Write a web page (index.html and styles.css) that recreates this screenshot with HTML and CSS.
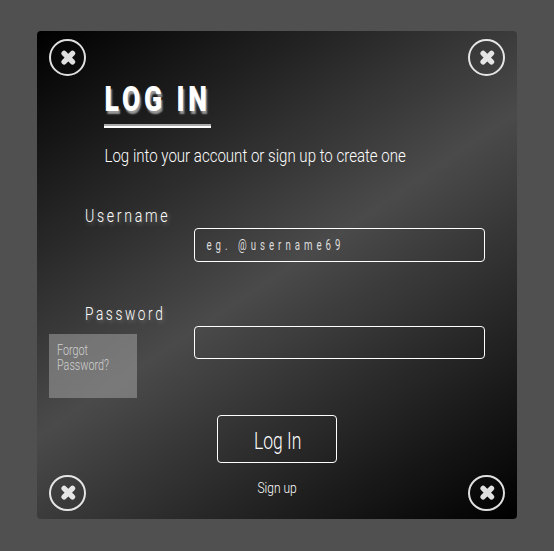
FILE: index.html
```html
<!DOCTYPE html>
<html lang="en">
<head>
<meta charset="utf-8">
<title>Log In</title>
<link rel="stylesheet" href="styles.css">
</head>
<body>
<svg width="0" height="0" class="defs"><symbol id="times" viewBox="0 0 21 21"><path d="M6.3 6.3l8.4 8.4M14.7 6.3l-8.4 8.4"/></symbol></svg>
<main class="card">
  <button class="close top left"><svg><use href="#times"/></svg></button>
  <button class="close top right"><svg><use href="#times"/></svg></button>
  <button class="close bottom left"><svg><use href="#times"/></svg></button>
  <button class="close bottom right"><svg><use href="#times"/></svg></button>
  <header class="intro">
    <h1><span class="narrow title">LOG IN</span></h1>
    <p><span class="narrow lead">Log into your account or sign up to create one</span></p>
  </header>
  <form class="form">
    <div class="field"><label><span class="narrow user">Username</span></label><div class="input"><span class="narrow hint">eg. @username69</span></div></div>
    <div class="field"><label><span class="narrow pass">Password</span></label><div class="input short"></div></div>
    <button type="button" class="submit"><span class="narrow login">Log In</span></button>
    <a class="signup"><span class="narrow sign">Sign up</span></a>
  </form>
  <a class="forgot"><span class="narrow forgot-text">Forgot<br>Password?</span></a>
</main>
</body>
</html>
```
FILE: styles.css
```css
* { box-sizing: border-box; }
body { margin: 0; height: 551px; padding: 31px 37px; background: #505050; color: #fff; font-family: Roboto, sans-serif; font-weight: 300; overflow: hidden; }
h1, p { margin: 0; }
button { font: inherit; color: inherit; background: none; padding: 0; }
.defs { position: absolute; }
.card { position: relative; width: 480px; height: 488px; border-radius: 4px; background: linear-gradient(146deg, #000, #4a4a4a 50%, #000); overflow: hidden; }
.narrow { display: inline-block; white-space: nowrap; transform-origin: left center; }

.close { position: absolute; width: 37px; height: 37px; border: 2px solid #fff; border-radius: 50%; opacity: .87; display: flex; align-items: center; justify-content: center; }
.close svg { width: 21px; height: 21px; fill: none; stroke: #fff; stroke-width: 5.4px; stroke-linecap: round; transform: translate(.8px, .1px); }
.top { top: 8px; }
.bottom { bottom: 8px; height: 36.5px; }
.left { left: 12px; }
.right { right: 12px; }

.intro { padding: 49px 0 0 67px; }
h1 { width: 107px; height: 48px; line-height: 40px; font-size: 35px; font-weight: 900; border-bottom: 2px solid #fff; box-shadow: inset 0 -2px #aaa; text-shadow: 2px 3px 2px #999; }
.title { letter-spacing: 5px; transform: translateX(.5px) scaleX(.76); }
.intro p { height: 24px; margin-top: 16px; line-height: 24px; font-size: 19px; }
.lead { transform: translate(.5px, -.5px) scaleX(.792); }

.form { display: flex; flex-direction: column; align-items: center; }
.field { align-self: stretch; height: 98px; padding: 36px 32px 0 48px; display: flex; flex-direction: column; align-items: stretch; }
.field label { height: 24px; line-height: 23px; font-size: 19px; text-shadow: 2px 2px 5px #777; }
.user { letter-spacing: 3.6px; transform: scaleX(.745); }
.pass { letter-spacing: 3.6px; transform: scaleX(.72); }
.input { width: 291px; height: 34px; align-self: flex-end; border: 1px solid #fff; border-radius: 4px; padding-left: 11px; line-height: 33px; font-size: 14px; color: #ddd; flex-shrink: 0; }
.short { height: 33px; }
.hint { font-weight: 400; letter-spacing: 5.8px; transform: translateX(.5px) scaleX(.69); }
.submit { width: 120px; height: 48px; margin-top: 51px; border: 1px solid #fff; border-radius: 4px; font-size: 24px; line-height: 50px; text-align: left; padding-left: 36px; }
.login { transform: scaleX(.73); }
.signup { width: 40px; height: 20px; margin-top: 15px; line-height: 20px; font-size: 15px; }
.sign { transform: translateX(.5px) scaleX(.8); }

.forgot { position: absolute; left: 12px; top: 303px; width: 88px; height: 64px; padding: 8px; background: rgba(160, 160, 160, .55); color: #d0d0d0; font-size: 15px; line-height: 15px; }
.forgot-text { transform: translateY(.5px) scaleX(.72); }
```
